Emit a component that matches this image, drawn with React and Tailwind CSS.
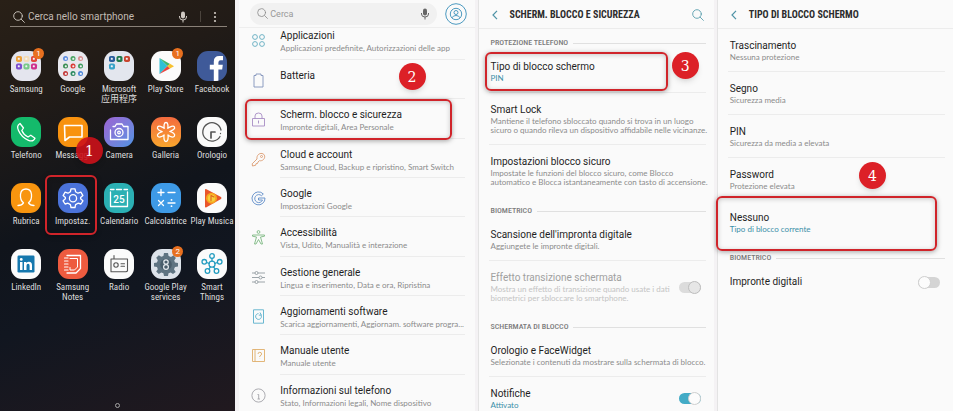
import React, { useState } from 'react';

const Tile = ({ bg, children }) => (
  <span className={`block h-[30px] w-[30px] overflow-hidden rounded-[11px] ${bg}`}>
    <svg viewBox="0 0 30 30" className="h-full w-full" fill="none" stroke="white" strokeWidth="1.3" strokeLinecap="round" strokeLinejoin="round">
      {children}
    </svg>
  </span>
);

// small coloured squares shown inside a folder icon
const Dots = ({ colors, round }) => (
  <g stroke="none">
    {colors.map((color, i) => {
      const x = 5 + (i % 3) * 7.5;
      const y = 5 + Math.floor(i / 3) * 7.5;
      return (
        <g key={i}>
          <rect x={x} y={y} width={round ? 5 : 6} height={round ? 5 : 6} rx={round ? 2.5 : 1.8} fill={color} />
          <rect x={x + 1.8} y={y + 1.8} width="2" height="2" rx="0.6" fill="#f2f2f6" />
        </g>
      );
    })}
  </g>
);

const apps = [
  {
    name: 'Samsung', badge: '1', bg: 'bg-[#e4e5ee]',
    icon: <Dots colors={['#eda13c', '#f3dcb8', '#e2483c', '#7d4fd0', '#79c98a', '#cf2f8e']} />,
  },
  {
    name: 'Google', bg: 'bg-[#e8e8ee]',
    icon: <Dots round colors={['#5e8de0', '#4aa564', '#d98f90', '#3b8e53', '#d93a34', '#3f9b5f', '#c23a3a', '#2b8a60', '#4c86d8']} />,
  },
  {
    name: 'Microsoft 应用程序', lines: ['Microsoft', '应用程序'], bg: 'bg-[#e3e6ee]',
    icon: <Dots colors={['#2a5d9c', '#1f7a4c', '#c8452f', '#39a3c8']} />,
  },
  {
    name: 'Play Store', badge: '1', bg: 'bg-[#fbfbfb]',
    icon: (
      <g stroke="none">
        <path d="M8.5 7 L16.5 15 L8.5 23 Z" fill="#2fbfd6" />
        <path d="M8.5 7 L19 13 L16.5 15 Z" fill="#3fb56b" />
        <path d="M8.5 23 L19 17.5 L16.5 15 Z" fill="#e8433f" />
        <path d="M19 12.8 L23 15.2 L19 17.6 L16.3 15 Z" fill="#f7c12f" />
      </g>
    ),
  },
  {
    name: 'Facebook', bg: 'bg-[#3f5a99]',
    icon: <path d="M16.8 30 V18.4 H12.8 V13.8 H16.8 V10.5 Q16.8 5 22.3 5 H26 V9.3 H23.6 Q21.4 9.3 21.4 11.4 V13.8 H25.8 L25.2 18.4 H21.4 V30 Z" fill="white" stroke="none" />,
  },
  {
    name: 'Telefono', bg: 'bg-[#14ba6b]',
    icon: <path d="M9 6.5 C6.5 8 6 10.5 7.5 13.5 C9.5 18 13 21.5 17.5 23.3 C20.5 24.5 23 23.5 24 21.2 L19.8 18.2 L17 20 C14 18.5 12 16.5 10.8 13.5 L12.5 11 Z" />,
  },
  {
    name: 'Messaggi', bg: 'bg-[#f8920f]',
    icon: <path d="M6.5 8.5 H24 V20 H11.5 L7 23.5 Z" strokeWidth="1.6" />,
  },
  {
    name: 'Camera', bg: 'bg-gradient-to-br from-[#9a63d2] to-[#4a93e4]',
    icon: (
      <g>
        <path d="M9 9.5 H11 L12.5 7 H18 L19.5 9.5 H24 V22.5 H6.5 V13" />
        <circle cx="15" cy="15.5" r="4" />
        <circle cx="15" cy="15.5" r="1.3" />
      </g>
    ),
  },
  {
    name: 'Galleria', bg: 'bg-gradient-to-b from-[#f36a3e] to-[#f8a52c]',
    icon: (
      <path d="M15 5.5 C17 5.5 17.2 8.5 16.8 11.3 C19 9.6 22.5 8 23.5 10 C24.5 12 21.5 13.4 18.8 14.5 C21.5 15.3 24.5 17 23.5 19 C22.5 21 19 19.8 17 18 C17.5 21 17 24.5 15 24.5 C13 24.5 12.6 21 13.1 18 C11 19.8 7.6 21 6.6 19 C5.6 17 8.5 15.5 11.2 14.6 C8.5 13.6 5.6 12 6.6 10 C7.6 8 11 9.6 13.2 11.3 C12.8 8.5 13 5.5 15 5.5 Z" />
    ),
  },
  {
    name: 'Orologio', bg: 'bg-[#fafafa]',
    icon: (
      <g stroke="#555">
        <path d="M24 13 A9.2 9.2 0 1 0 23 19.5" />
        <path d="M14 21 V15 H18" strokeWidth="1.7" />
        <path d="M23.5 16.5 V16.6" />
      </g>
    ),
  },
  {
    name: 'Rubrica', bg: 'bg-[#f8950f]',
    icon: <path d="M7 22.5 C9 22.5 11.5 21.5 12.5 19.8 C10 18 9.2 15 9.5 11.5 C9.8 8.3 12 6 15 6 C18 6 20.2 8.3 20.5 11.5 C20.8 15 20 18 17.5 19.8 C18.5 21.5 21 22.5 23 22.5" />,
  },
  {
    name: 'Impostaz.', bg: 'bg-[#4b73da]', boxed: true,
    icon: (
      <g>
        <path d="M13 5.8 H17 L17.6 8.8 L20 10.2 L22.9 9.2 L24.9 12.6 L22.6 14.6 V15.8 L24.9 17.8 L22.9 21 L20 20.2 L17.6 21.6 L17 24.5 H13 L12.4 21.6 L10 20.2 L7.1 21 L5.1 17.8 L7.4 15.8 V14.6 L5.1 12.6 L7.1 9.2 L10 10.2 L12.4 8.8 Z" />
        <circle cx="15" cy="15.2" r="3.6" />
      </g>
    ),
  },
  {
    name: 'Calendario', bg: 'bg-[#2bb0b4]',
    icon: (
      <g>
        <path d="M6.5 9 V23.5 H23.5 V9" />
        <path d="M6.5 6.5 H10 M12.5 6.5 H17.5 M20 6.5 H23.5" />
        <text x="15" y="19.5" textAnchor="middle" fontSize="10" fontWeight="500" fontFamily="Roboto, sans-serif" fill="white" stroke="none">25</text>
      </g>
    ),
  },
  {
    name: 'Calcolatrice', bg: 'bg-[#3e9ae6]',
    icon: (
      <g>
        <path d="M10 6.5 V12.5 M7 9.5 H13 M17 9.5 H24 M7.5 17.5 L12.5 22.5 M12.5 17.5 L7.5 22.5 M17 20 H24" />
        <path d="M20.5 16.8 V16.9 M20.5 23.1 V23.2" strokeWidth="1.8" />
      </g>
    ),
  },
  {
    name: 'Play Musica', bg: 'bg-[#fbfbfb]',
    icon: (
      <g stroke="none">
        <path d="M8 7 Q8 5.5 9.5 6.3 L24 14 Q25 15 24 15.9 L9.5 24.3 Q8 25 8 23.5 Z" fill="#e9562c" />
        <circle cx="14.5" cy="15.2" r="5.5" fill="#f7a61f" />
        <circle cx="14.5" cy="15.2" r="3.6" fill="#f4d03c" />
        <path d="M14 17.8 V12.5 L17 14" stroke="#e2601f" strokeWidth="1.1" fill="none" />
      </g>
    ),
  },
  {
    name: 'LinkedIn', bg: 'bg-[#fbfbfb]',
    icon: (
      <g stroke="none">
        <rect x="6.5" y="6.5" width="17" height="17" rx="1.2" fill="#1577ad" />
        <path d="M9 13 H11.5 V21 H9 Z M13 13 H15.4 V14.2 Q16.2 12.8 18 12.8 Q21 12.8 21 16.3 V21 H18.6 V16.8 Q18.6 14.8 17.1 14.8 Q15.5 14.8 15.5 16.8 V21 H13 Z" fill="white" />
        <circle cx="10.25" cy="10.4" r="1.4" fill="white" />
      </g>
    ),
  },
  {
    name: 'Samsung Notes', lines: ['Samsung', 'Notes'], bg: 'bg-[#ee5b3f]',
    icon: (
      <g>
        <path d="M9 6.5 H22.5 V19.5 L18 24 H9" />
        <path d="M12 9.5 H19.5 V18 L16.5 21 H12 V18.5" strokeWidth="1" />
        <path d="M6.5 9 H10 M6.5 12 H10 M6.5 15 H10 M6.5 18 H10 M6.5 21 H10" strokeWidth="1.2" />
      </g>
    ),
  },
  {
    name: 'Radio', bg: 'bg-[#fbfbfb]',
    icon: (
      <g stroke="#555" strokeWidth="1.1">
        <path d="M10 6.5 V9.5 M7 10 H23.5 V22 L22 22.8 H7 Z" />
        <circle cx="12" cy="16" r="2.2" />
        <path d="M17 14.8 H20.5 M17 17.3 H20.5" />
      </g>
    ),
  },
  {
    name: 'Google Play services', lines: ['Google Play', 'services'], badge: '2', bg: 'bg-[#dde3ea]',
    icon: (
      <g stroke="none">
        <path d="M13 4 H17 L17.6 7 L20 8 L22.6 6.3 L24.9 9 L23.2 11.5 L24 13.5 L27 14 V17.5 L24 18 L23 20.2 L24.7 23 L22 25 L19.7 23.5 L17.5 24.3 L17 27 H13 L12.4 24.3 L10.3 23.5 L7.8 25 L5.2 22.6 L6.8 20.2 L6 18 L3 17.5 V14 L6 13.4 L6.8 11.2 L5.2 8.8 L7.8 6.2 L10.3 7.8 L12.4 7 Z" fill="#5f7482" />
        <circle cx="15" cy="15.5" r="5.8" fill="#495d6b" />
        <circle cx="15" cy="13" r="2.2" stroke="#e7ecf0" strokeWidth="1.2" />
        <circle cx="15" cy="18" r="2.4" stroke="#e7ecf0" strokeWidth="1.2" />
      </g>
    ),
  },
  {
    name: 'Smart Things', lines: ['Smart', 'Things'], bg: 'bg-[#fbfbfb]',
    icon: (
      <g stroke="#249dc0" strokeWidth="1.3">
        <path d="M15 9.5 V12 M9.8 13.5 L12 14.5 M20.2 13.5 L18 14.5 M13.4 17.8 L12 20 M16.6 17.8 L18 20" />
        <circle cx="15" cy="15.2" r="3" />
        <circle cx="15" cy="7" r="2.3" />
        <circle cx="7.3" cy="12.8" r="2.3" />
        <circle cx="22.7" cy="12.8" r="2.3" />
        <circle cx="10.5" cy="22" r="2.3" />
        <circle cx="19.5" cy="22" r="2.3" />
      </g>
    ),
  },
];

const settings = [
  {
    title: 'Applicazioni', sub: 'Applicazioni predefinite, Autorizzazioni delle app', color: 'text-[#62acbf]',
    icon: <g><circle cx="4" cy="4" r="2.4" /><circle cx="11" cy="4" r="2.4" /><circle cx="4" cy="11" r="2.4" /><circle cx="11" cy="11" r="2.4" /></g>,
  },
  {
    title: 'Batteria', color: 'text-[#8193bb]',
    icon: <path d="M3 2.5 H5 V1 H10 V2.5 H12 V14 H3 Z" />,
  },
  {
    title: 'Scherm. blocco e sicurezza', sub: 'Impronte digitali, Area Personale', color: 'text-[#a78cc4]', boxed: true,
    icon: <g><path d="M1.5 6.5 H13.5 V14 H1.5 Z M4 6.5 V4 Q4 1 7.5 1 Q11 1 11 4 V6.5" /><path d="M7.5 9 V11.5 M7 9 H8" /></g>,
  },
  {
    title: 'Cloud e account', sub: 'Samsung Cloud, Backup e ripristino, Smart Switch', color: 'text-[#dd9c72]',
    icon: <g><path d="M6 7 C5.5 3.5 8 1 11 1.5 C14 2 14.5 5.5 12.5 7.5 C11.2 8.8 9.5 9 8.3 8.7 L7 10 L6.5 11.5 L5 11.7 L4.6 13.3 L1.5 14 L1.2 11.8 Z" /><circle cx="10.5" cy="4.5" r="1" /></g>,
  },
  {
    title: 'Google', sub: 'Impostazioni Google', color: 'text-[#5f8cc8]',
    icon: <path d="M12.3 3 A6.5 6.5 0 1 0 14 7 H7.5 V9 H11.5 A4 4 0 1 1 10.5 4.7 Z" />,
  },
  {
    title: 'Accessibilità', sub: 'Vista, Udito, Manualità e interazione', color: 'text-[#7db982]',
    icon: <g><circle cx="7.5" cy="2" r="1.4" /><path d="M1.5 5 H13.5 V6.2 L9.5 7 L11.5 14 H10 L7.5 9.5 L5 14 H3.5 L5.5 7 L1.5 6.2 Z" /></g>,
  },
  {
    title: 'Gestione generale', sub: 'Lingua e inserimento, Data e ora, Ripristina', color: 'text-[#929ba0]',
    icon: <g><path d="M1 3 H4 M7 3 H14 M1 7.5 H8 M11 7.5 H14 M1 12 H4 M7 12 H14" /><circle cx="5.5" cy="3" r="1.5" /><circle cx="9.5" cy="7.5" r="1.5" /><circle cx="5.5" cy="12" r="1.5" /></g>,
  },
  {
    title: 'Aggiornamenti software', sub: 'Scarica aggiornamenti, Aggiornam. software progra...', color: 'text-[#5ab0cc]',
    icon: <g><path d="M2.5 0.8 H12.5 V14.2 H2.5 Z" /><path d="M10 6 A2.9 2.9 0 1 1 7.5 4.6 M9 3.5 L10.3 6 L7.8 6.2" /></g>,
  },
  {
    title: 'Manuale utente', sub: 'Manuale utente', color: 'text-[#dfae6a]',
    icon: <g><path d="M1.5 1.5 H13.5 V13.5 H1.5 Z M4 1.5 V13.5" /><path d="M7 6 Q7 4.3 8.8 4.3 Q10.6 4.3 10.6 6 Q10.6 7.2 8.8 8 V9 M8.8 10.8 V11" /></g>,
  },
  {
    title: 'Informazioni sul telefono', sub: 'Stato, Informazioni legali, Nome dispositivo', color: 'text-[#a3a3a8]',
    icon: <g><circle cx="7.5" cy="7.5" r="6.6" /><path d="M6.5 6.5 H7.7 V11 M6.5 11 H9 M7.5 4.2 V4.3" /></g>,
  },
];

const Search = ({ className }) => (
  <svg viewBox="0 0 12 12" className={className} fill="none" stroke="currentColor" strokeWidth="0.9" strokeLinecap="round">
    <circle cx="5" cy="5" r="4.3" />
    <path d="M8.2 8.2 L11.4 11.4" />
  </svg>
);

const Mic = ({ className }) => (
  <svg viewBox="0 0 10 12" className={className} fill="currentColor">
    <rect x="3" y="0.5" width="4" height="7" rx="2" />
    <path d="M1.5 5 V6 Q1.5 9 5 9 Q8.5 9 8.5 6 V5 M5 9 V11.5" fill="none" stroke="currentColor" strokeWidth="1" />
  </svg>
);

const Step = ({ n, className }) => (
  <span className={`pointer-events-none absolute z-20 flex h-[27px] w-[27px] items-center justify-center rounded-full font-['DejaVu_Serif',serif] text-[14px] leading-none text-white shadow-md ${className}`}>
    {n}
  </span>
);

const Frame = ({ className }) => (
  <span className={`pointer-events-none absolute z-10 rounded-md border-2 border-[#d0242a] shadow-[0_1px_5px_rgba(0,0,0,0.35),inset_0_1px_5px_rgba(0,0,0,0.2)] ${className}`} />
);

const Toggle = ({ label, on, disabled }) => {
  const [checked, setChecked] = useState(on);
  return (
    <input
      type="checkbox"
      aria-label={label}
      checked={checked}
      disabled={disabled}
      onChange={() => setChecked(!checked)}
      className="relative h-[11px] w-[22px] shrink-0 appearance-none rounded-full bg-[#d4d4d4] before:absolute before:-top-px before:left-0 before:h-[13px] before:w-[13px] before:rounded-full before:border before:border-[#cfcfcf] before:bg-[#fcfcfc] checked:bg-[#43abc6] checked:before:left-[9px] disabled:bg-[#dcdcdc] disabled:before:left-[9px] disabled:before:border-[#bdbdbd] disabled:before:bg-[#e6e6e6]"
    />
  );
};

const Header = ({ title, search }) => (
  <header className="flex h-[29px] items-center border-b border-[#ececec] pl-[13px] pr-[10px] pt-px">
    <button aria-label="Indietro" className="text-[#4e93a6]">
      <svg viewBox="0 0 6 10" className="h-[10px] w-[6px]" fill="none" stroke="currentColor" strokeWidth="1.2">
        <path d="M5 0.8 L1 5 L5 9.2" />
      </svg>
    </button>
    <h1 className="ml-3 flex-1 whitespace-nowrap font-['Roboto_Condensed','Roboto',sans-serif] text-[10px] font-bold leading-[14px] text-[#2c2c2c]">{title}</h1>
    {search && (
      <button aria-label="Cerca" className="text-[#5a9fae]"><Search className="h-[12px] w-[12px]" /></button>
    )}
  </header>
);

const Section = ({ title }) => (
  <div className="flex h-[21px] items-center gap-[5px] pl-3 pr-2 pt-[7px]">
    <h2 className="whitespace-nowrap font-['Roboto_Condensed','Roboto',sans-serif] text-[8px] font-medium leading-[10px] text-[#7c7c7c]">{title}</h2>
    <span className="h-px flex-1 bg-[#e0e0e0]" />
  </div>
);

const Row = ({ title, sub, blue, toggle, on, disabled, last, children }) => (
  <div className={`relative ml-[10px] mr-2 flex items-center border-b pb-[9px] pl-[2px] pt-[10px] ${last ? 'border-transparent' : 'border-[#ececec]'}`}>
    <button disabled={disabled} className="min-w-0 flex-1 text-left">
      <span className={`block whitespace-nowrap text-[10px] leading-[14px] ${disabled ? 'text-[#a0a0a0]' : 'text-[#1f1f1f]'}`}>{title}</span>
      {sub && (
        <span className={`block whitespace-pre font-['Lato','Roboto',sans-serif] text-[8px] leading-[9px] ${blue ? 'text-[#3b8fa8]' : disabled ? 'text-[#c4c4c4]' : 'text-[#8b8b8b]'}`}>{sub}</span>
      )}
    </button>
    {toggle && <div className="mr-[5px] flex"><Toggle label={title} on={on} disabled={disabled} /></div>}
    {children}
  </div>
);

const HomeScreen = () => (
  <section className="relative flex flex-col overflow-hidden bg-[linear-gradient(160deg,#292017_0%,#211b17_22%,#10141b_50%,#111620_68%,#21191f_100%)]">
    <div className="ml-[10px] mr-2 mt-[7px] flex h-5 items-center border-b border-[#8a8178] pl-[3px] text-[#cfc9c2]">
      <Search className="h-[12px] w-[12px]" />
      <input aria-label="Cerca nello smartphone" placeholder="Cerca nello smartphone" className="ml-[3px] min-w-0 flex-1 bg-transparent text-[10px] leading-[14px] outline-none placeholder:text-[#c2bbb3]" />
      <button aria-label="Ricerca vocale"><Mic className="h-[12px] w-[10px]" /></button>
      <span className="ml-3 h-[11px] w-px bg-[#4b443d]" />
      <button aria-label="Altre opzioni" className="ml-3 mr-[10px]">
        <svg viewBox="0 0 4 12" className="h-[12px] w-1" fill="currentColor">
          <circle cx="2" cy="2" r="1.1" /><circle cx="2" cy="6" r="1.1" /><circle cx="2" cy="10" r="1.1" />
        </svg>
      </button>
    </div>
    <div className="mt-6 grid auto-rows-[66px] grid-cols-5 pl-[3px]">
      {apps.map((app) => (
        <button key={app.name} className="relative flex min-w-0 flex-col items-center">
          <Tile bg={app.bg}>{app.icon}</Tile>
          <span className="mt-[3px] text-center font-['Roboto_Condensed','Roboto','Noto_Sans_CJK_SC',sans-serif] text-[9px] leading-[10px] text-[#dedede]">
            {(app.lines || [app.name]).map((line) => (
              <span key={line} className="block whitespace-nowrap">{line}</span>
            ))}
          </span>
          {app.badge && (
            <span className="absolute -top-[3px] left-[30px] flex h-[11px] w-[11px] items-center justify-center rounded-full bg-[#e8701f] text-[8px] leading-none text-white">{app.badge}</span>
          )}
          {app.boxed && <Frame className="-top-2 left-[-4px] h-[60px] w-[52px]" />}
        </button>
      ))}
    </div>
    <span className="mx-auto mb-[3px] mt-auto h-[5px] w-[5px] rounded-full border border-[#a5a5a5]" />
    <Step n="1" className="left-[76px] top-[137px] bg-[#cc1119]/90" />
  </section>
);

const SettingsItem = ({ item, first }) => (
  <li className={`relative min-w-0 ${first ? 'h-8' : ''}`}>
    <button className={`flex h-full w-full items-start pl-3 text-left ${first ? 'pt-px' : 'pt-[9px]'}`}>
      <svg viewBox="0 0 15 15" className={`mt-1 h-[15px] w-[15px] shrink-0 ${item.color}`} fill="none" stroke="currentColor" strokeWidth="0.9">{item.icon}</svg>
      <span className="ml-[14px] min-w-0 flex-1 pr-2">
        <span className="block whitespace-nowrap text-[10px] leading-[14px] text-[#1f1f1f]">{item.title}</span>
        {item.sub && <span className="block whitespace-nowrap font-['Lato','Roboto',sans-serif] text-[8px] leading-[10px] text-[#8b8b8b]">{item.sub}</span>}
      </span>
    </button>
    <span className="absolute bottom-0 left-[41px] right-[10px] h-px bg-[#ececec]" />
    {item.boxed && <Frame className="left-[6px] right-[23px] top-0 h-[41px]" />}
  </li>
);

const SettingsScreen = () => (
  <section className="relative flex flex-col overflow-hidden bg-[#fafafa]">
    <header className="flex h-7 shrink-0 items-center border-b border-[#eeeeee] pl-[11px] pr-2">
      <div className="flex h-[22px] flex-1 items-center rounded-full bg-[#f1f1f1] pl-[7px] pr-[7px] text-[#8d8d8d]">
        <Search className="h-[11px] w-[11px]" />
        <input aria-label="Cerca" placeholder="Cerca" className="ml-[2px] min-w-0 flex-1 bg-transparent text-[9px] leading-[14px] outline-none placeholder:text-[#999999]" />
        <button aria-label="Ricerca vocale" className="text-[#666666]"><Mic className="h-[12px] w-[10px]" /></button>
      </div>
      <button aria-label="Account" className="ml-2 text-[#4c9ac0]">
        <svg viewBox="0 0 22 22" className="h-[22px] w-[22px]" fill="none" stroke="currentColor" strokeWidth="1">
          <circle cx="11" cy="11" r="10.3" />
          <circle cx="11" cy="11" r="5.7" />
          <circle cx="11" cy="9.5" r="2" />
          <path d="M7 14.8 Q8 12.5 11 12.5 Q14 12.5 15 14.8" />
        </svg>
      </button>
    </header>
    <ul className="-mb-[3px] flex flex-1 flex-col">
      <SettingsItem item={settings[0]} first />
      <li className="grid flex-1 grid-cols-1">
        <ul className="grid auto-rows-fr grid-cols-1">
          {settings.slice(1).map((item) => <SettingsItem key={item.title} item={item} />)}
        </ul>
      </li>
    </ul>
    <Step n="2" className="right-[49px] top-[63px] bg-[#dc2027]" />
  </section>
);

const SecurityScreen = () => (
  <section className="relative -ml-px overflow-hidden border-l border-[#e3e3e3] bg-[#fafafa]">
    <Header title="SCHERM. BLOCCO E SICUREZZA" search />
    <Section title="PROTEZIONE TELEFONO" />
    <Row title="Tipo di blocco schermo" sub="PIN" blue>
      <Frame className="-left-[4px] right-[38px] top-[2px] h-[39px]" />
      <Step n="3" className="right-[7px] top-[2px] bg-[#dc2027]" />
    </Row>
    <Row title="Smart Lock" sub={'Mantiene il telefono sbloccato quando si trova in un luogo\nsicuro o quando rileva un dispositivo affidabile nelle vicinanze.'} />
    <Row title="Impostazioni blocco sicuro" sub={'Impostate le funzioni del blocco sicuro, come Blocco\nautomatico e Blocca istantaneamente con tasto di accensione.'} last />
    <Section title="BIOMETRICO" />
    <Row title="Scansione dell'impronta digitale" sub="Aggiungete le impronte digitali." />
    <Row title="Effetto transizione schermata" sub={'Mostra un effetto di transizione quando usate i dati\nbiometrici per sbloccare lo smartphone.'} toggle disabled last />
    <Section title="SCHERMATA DI BLOCCO" />
    <Row title="Orologio e FaceWidget" sub="Selezionate i contenuti da mostrare sulla schermata di blocco." />
    <div className="-mb-[9px]">
      <Row title="Notifiche" sub="Attivato" blue toggle on last />
    </div>
  </section>
);

const LockTypeScreen = () => (
  <section className="relative -ml-px border-l border-[#e3e3e3] bg-[#fafafa]">
    <Header title="TIPO DI BLOCCO SCHERMO" />
    <Row title="Trascinamento" sub="Nessuna protezione" />
    <Row title="Segno" sub="Sicurezza media" />
    <Row title="PIN" sub="Sicurezza da media a elevata" />
    <Row title="Password" sub="Protezione elevata" last>
      <Step n="4" className="right-[59px] top-[4px] bg-[#dc2027]" />
    </Row>
    <Row title="Nessuno" sub="Tipo di blocco corrente" blue last>
      <Frame className="-left-[12px] right-[8px] -top-[5px] h-[55px]" />
    </Row>
    <Section title="BIOMETRICO" />
    <Row title="Impronte digitali" toggle on={false} last />
  </section>
);

const App = () => (
  <main className="grid h-screen grid-cols-4 gap-1 overflow-hidden bg-[#f4f2f4] font-['Roboto',sans-serif]">
    <HomeScreen />
    <SettingsScreen />
    <SecurityScreen />
    <LockTypeScreen />
  </main>
);

export default App;
